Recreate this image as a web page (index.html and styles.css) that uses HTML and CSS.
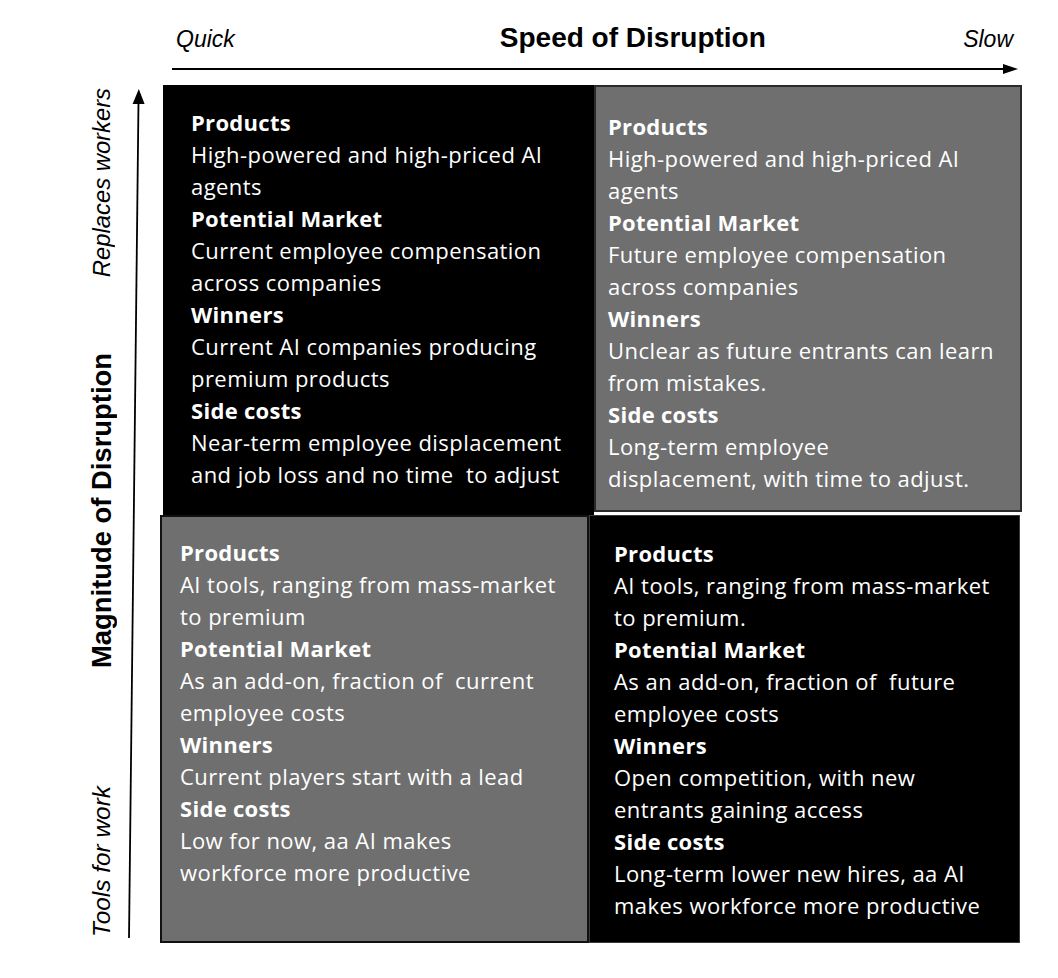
FILE: index.html
```html
<!DOCTYPE html>
<html lang="en">
<head>
<meta charset="utf-8">
<title>Speed and Magnitude of Disruption</title>
<link rel="stylesheet" href="styles.css">
</head>
<body>
<div class="chart">
  <div class="corner"></div>
  <header class="top-axis">
    <div class="top-labels">
      <span class="end-label">Quick</span>
      <span class="axis-title">Speed of Disruption</span>
      <span class="end-label slow">Slow</span>
    </div>
    <svg class="h-arrow" width="846" height="12" viewBox="0 0 846 12">
      <line x1="0" y1="6" x2="834" y2="6" stroke="#000" stroke-width="2"/>
      <polygon points="831,1 846,6 831,11" fill="#000"/>
    </svg>
  </header>
  <aside class="left-axis">
    <div class="v-labels">
      <span class="v-label">Replaces workers</span>
      <span class="v-label v-title">Magnitude of Disruption</span>
      <span class="v-label v-bottom">Tools for work</span>
    </div>
    <svg class="v-arrow" width="24" height="858" viewBox="0 0 24 858">
      <line x1="14.5" y1="16" x2="5" y2="853" stroke="#000" stroke-width="1.8"/>
      <polygon points="14.8,4 8.6,19 20.6,19" fill="#000"/>
    </svg>
  </aside>
  <main class="quadrants">
    <div class="q-row">
      <section class="quad q-tl">
        <p class="q-head">Products</p>
        <p class="q-text">High-powered and high-priced AI<br>agents</p>
        <p class="q-head">Potential Market</p>
        <p class="q-text">Current employee compensation<br>across companies</p>
        <p class="q-head">Winners</p>
        <p class="q-text">Current AI companies producing<br>premium products</p>
        <p class="q-head">Side costs</p>
        <p class="q-text">Near-term employee displacement<br>and job loss and no time&nbsp; to adjust</p>
      </section>
      <section class="quad q-tr">
        <p class="q-head">Products</p>
        <p class="q-text">High-powered and high-priced AI<br>agents</p>
        <p class="q-head">Potential Market</p>
        <p class="q-text">Future employee compensation<br>across companies</p>
        <p class="q-head">Winners</p>
        <p class="q-text">Unclear as future entrants can learn<br>from mistakes.</p>
        <p class="q-head">Side costs</p>
        <p class="q-text">Long-term employee<br>displacement, with time to adjust.</p>
      </section>
    </div>
    <div class="q-row">
      <section class="quad q-bl">
        <p class="q-head">Products</p>
        <p class="q-text">AI tools, ranging from mass-market<br>to premium</p>
        <p class="q-head">Potential Market</p>
        <p class="q-text">As an add-on, fraction of&nbsp; current<br>employee costs</p>
        <p class="q-head">Winners</p>
        <p class="q-text">Current players start with a lead</p>
        <p class="q-head">Side costs</p>
        <p class="q-text">Low for now, aa AI makes<br>workforce more productive</p>
      </section>
      <section class="quad q-br">
        <p class="q-head">Products</p>
        <p class="q-text">AI tools, ranging from mass-market<br>to premium.</p>
        <p class="q-head">Potential Market</p>
        <p class="q-text">As an add-on, fraction of&nbsp; future<br>employee costs</p>
        <p class="q-head">Winners</p>
        <p class="q-text">Open competition, with new<br>entrants gaining access</p>
        <p class="q-head">Side costs</p>
        <p class="q-text">Long-term lower new hires, aa AI<br>makes workforce more productive</p>
      </section>
    </div>
  </main>
</div>
</body>
</html>
```

FILE: styles.css
```css
* {
  box-sizing: border-box;
}

html, body {
  margin: 0;
  padding: 0;
  background: #ffffff;
}

body {
  font-family: "Liberation Sans", Arial, sans-serif;
  color: #000000;
}

.chart {
  display: grid;
  grid-template-columns: 160px 862px;
  grid-template-rows: 85px 858px;
  width: 1058px;
}

.top-axis {
  display: flex;
  flex-direction: column;
}

.top-labels {
  display: flex;
  align-items: baseline;
  padding: 22px 9px 0 16px;
  white-space: nowrap;
}

.end-label {
  font-style: italic;
  font-size: 23px;
}

.axis-title {
  font-weight: bold;
  font-size: 28px;
  margin-left: 265px;
}

.slow {
  margin-left: auto;
}

.h-arrow {
  display: block;
  margin: 9px 0 0 12px;
}

.left-axis {
  display: flex;
  padding-left: 86px;
}

.v-labels {
  width: 32px;
  display: flex;
  flex-direction: column;
  align-items: center;
  padding: 3px 0 6px;
}

.v-label {
  writing-mode: vertical-rl;
  transform: rotate(180deg);
  font-style: italic;
  font-size: 23.8px;
  white-space: nowrap;
  line-height: 32px;
}

.v-title {
  font-style: normal;
  font-weight: bold;
  font-size: 27.4px;
  margin-top: 76px;
}

.v-bottom {
  font-size: 24.4px;
  margin-top: auto;
}

.v-arrow {
  display: block;
  margin-left: 6px;
}

.quadrants {
  display: flex;
  flex-direction: column;
}

.q-row {
  display: flex;
  align-items: flex-start;
}

.quad {
  font-family: "Open Sans", "Noto Sans", sans-serif;
  font-size: 22px;
  line-height: 32px;
  color: #ffffff;
  white-space: nowrap;
}

.quad p {
  margin: 0;
}

.q-head {
  font-weight: 700;
  letter-spacing: 0.3px;
}

.q-text {
  letter-spacing: 0.45px;
}

.q-tl {
  background: #000000;
  margin-left: 3px;
  width: 431px;
  height: 430px;
  padding: 21px 0 0 28px;
}

.q-tr {
  background: #6f6f6f;
  border: 2px solid #2a2a2a;
  width: 428px;
  height: 427px;
  padding: 23px 0 0 12px;
}

.q-bl {
  background: #6f6f6f;
  border: 2px solid #111111;
  width: 429px;
  height: 428px;
  padding: 19px 0 0 18px;
}

.q-br {
  background: #000000;
  border: 1px solid #3a3a3a;
  width: 431px;
  height: 428px;
  padding: 21px 0 0 24px;
}
```
